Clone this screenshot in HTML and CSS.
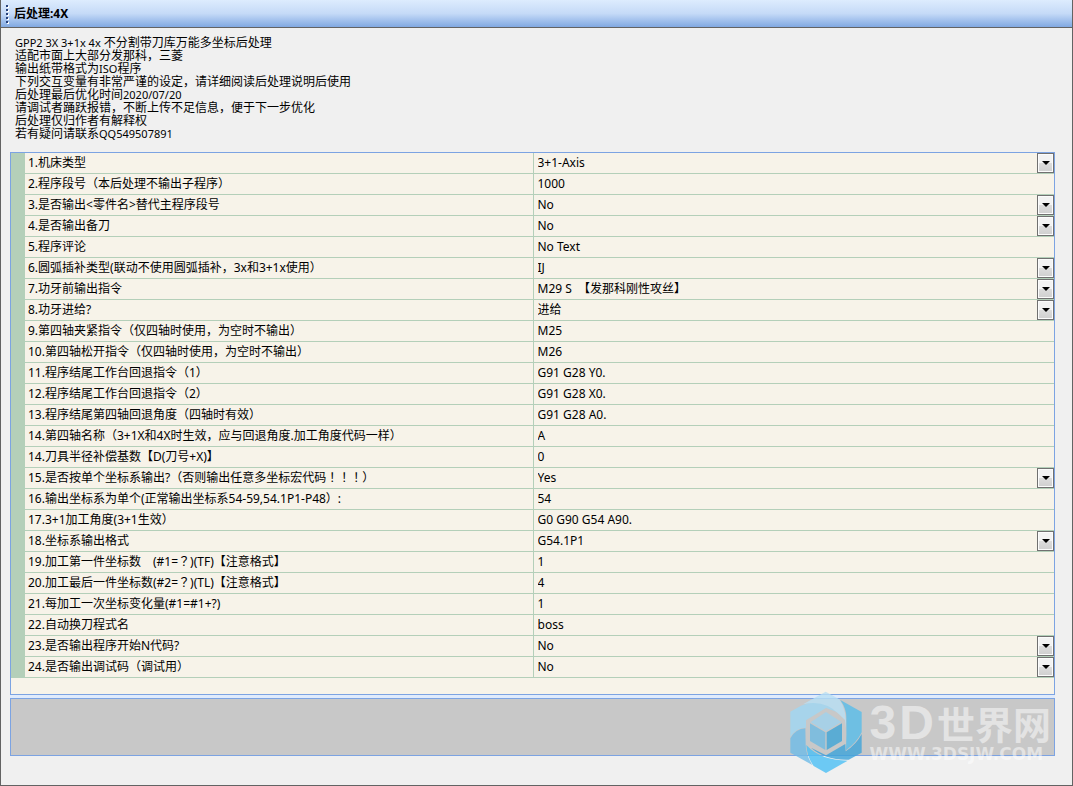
FILE: index.html
```html
<!DOCTYPE html>
<html lang="zh-CN">
<head>
<meta charset="utf-8">
<title>后处理:4X</title>
<link rel="stylesheet" href="styles.css">
</head>
<body>
<main class="panel">
<header class="titlebar"><span class="grip"><i></i><i></i><i></i><i></i><i></i></span><h1 class="title">后处理:4X</h1></header>
<div class="content">
<div class="intro">
<p><span class="latin">GPP2 3X 3+1x 4x</span> 不分割带刀库万能多坐标后处理</p>
<p>适配市面上大部分发那科，三菱</p>
<p>输出纸带格式为<span class="latin">ISO</span>程序</p>
<p>下列交互变量有非常严谨的设定，请详细阅读后处理说明后使用</p>
<p>后处理最后优化时间<span class="latin">2020/07/20</span></p>
<p>请调试者踊跃报错，不断上传不足信息，便于下一步优化</p>
<p>后处理仅归作者有解释权</p>
<p>若有疑问请联系<span class="latin">QQ549507891</span></p>
</div>
<div class="stack">
<div class="grid-box">
<table class="props">
<colgroup><col class="col-gutter"><col><col class="col-value"></colgroup>
<tbody>
<tr><td class="gutter"></td><th scope="row"><label for="f1">1.机床类型</label></th><td class="value"><div class="pick"><select id="f1"><option>3+1-Axis</option></select><span class="drop"></span></div></td></tr>
<tr><td class="gutter"></td><th scope="row"><label for="f2">2.程序段号（本后处理不输出子程序）</label></th><td class="value"><input id="f2" type="text" value="1000"></td></tr>
<tr><td class="gutter"></td><th scope="row"><label for="f3">3.是否输出&lt;零件名&gt;替代主程序段号</label></th><td class="value"><div class="pick"><select id="f3"><option>No</option></select><span class="drop"></span></div></td></tr>
<tr><td class="gutter"></td><th scope="row"><label for="f4">4.是否输出备刀</label></th><td class="value"><div class="pick"><select id="f4"><option>No</option></select><span class="drop"></span></div></td></tr>
<tr><td class="gutter"></td><th scope="row"><label for="f5">5.程序评论</label></th><td class="value"><input id="f5" type="text" value="No Text"></td></tr>
<tr><td class="gutter"></td><th scope="row"><label for="f6">6.圆弧插补类型(联动不使用圆弧插补，3x和3+1x使用）</label></th><td class="value"><div class="pick"><select id="f6"><option>IJ</option></select><span class="drop"></span></div></td></tr>
<tr><td class="gutter"></td><th scope="row"><label for="f7">7.功牙前输出指令</label></th><td class="value"><div class="pick"><select id="f7"><option>M29 S&nbsp; 【发那科刚性攻丝】</option></select><span class="drop"></span></div></td></tr>
<tr><td class="gutter"></td><th scope="row"><label for="f8">8.功牙进给?</label></th><td class="value"><div class="pick"><select id="f8"><option>进给</option></select><span class="drop"></span></div></td></tr>
<tr><td class="gutter"></td><th scope="row"><label for="f9">9.第四轴夹紧指令（仅四轴时使用，为空时不输出）</label></th><td class="value"><input id="f9" type="text" value="M25"></td></tr>
<tr><td class="gutter"></td><th scope="row"><label for="f10">10.第四轴松开指令（仅四轴时使用，为空时不输出）</label></th><td class="value"><input id="f10" type="text" value="M26"></td></tr>
<tr><td class="gutter"></td><th scope="row"><label for="f11">11.程序结尾工作台回退指令（1）</label></th><td class="value"><input id="f11" type="text" value="G91 G28 Y0."></td></tr>
<tr><td class="gutter"></td><th scope="row"><label for="f12">12.程序结尾工作台回退指令（2）</label></th><td class="value"><input id="f12" type="text" value="G91 G28 X0."></td></tr>
<tr><td class="gutter"></td><th scope="row"><label for="f13">13.程序结尾第四轴回退角度（四轴时有效）</label></th><td class="value"><input id="f13" type="text" value="G91 G28 A0."></td></tr>
<tr><td class="gutter"></td><th scope="row"><label for="f14">14.第四轴名称（3+1X和4X时生效，应与回退角度.加工角度代码一样）</label></th><td class="value"><input id="f14" type="text" value="A"></td></tr>
<tr><td class="gutter"></td><th scope="row"><label for="f14b">14.刀具半径补偿基数【D(刀号+X)】</label></th><td class="value"><input id="f14b" type="text" value="0"></td></tr>
<tr><td class="gutter"></td><th scope="row"><label for="f15">15.是否按单个坐标系输出?（否则输出任意多坐标宏代码<span lang="zh-TW">！！！</span>）</label></th><td class="value"><div class="pick"><select id="f15"><option>Yes</option></select><span class="drop"></span></div></td></tr>
<tr><td class="gutter"></td><th scope="row"><label for="f16">16.输出坐标系为单个(正常输出坐标系54-59,54.1P1-P48）:</label></th><td class="value"><input id="f16" type="text" value="54"></td></tr>
<tr><td class="gutter"></td><th scope="row"><label for="f17">17.3+1加工角度(3+1生效）</label></th><td class="value"><input id="f17" type="text" value="G0 G90 G54 A90."></td></tr>
<tr><td class="gutter"></td><th scope="row"><label for="f18">18.坐标系输出格式</label></th><td class="value"><div class="pick"><select id="f18"><option>G54.1P1</option></select><span class="drop"></span></div></td></tr>
<tr><td class="gutter"></td><th scope="row"><label for="f19">19.加工第一件坐标数　(#1=<span lang="zh-TW">？</span>)(TF)【注意格式】</label></th><td class="value"><input id="f19" type="text" value="1"></td></tr>
<tr><td class="gutter"></td><th scope="row"><label for="f20">20.加工最后一件坐标数(#2=<span lang="zh-TW">？</span>)(TL)【注意格式】</label></th><td class="value"><input id="f20" type="text" value="4"></td></tr>
<tr><td class="gutter"></td><th scope="row"><label for="f21">21.每加工一次坐标变化量(#1=#1+?)</label></th><td class="value"><input id="f21" type="text" value="1"></td></tr>
<tr><td class="gutter"></td><th scope="row"><label for="f22">22.自动换刀程式名</label></th><td class="value"><input id="f22" type="text" value="boss"></td></tr>
<tr><td class="gutter"></td><th scope="row"><label for="f23">23.是否输出程序开始N代码?</label></th><td class="value"><div class="pick"><select id="f23"><option>No</option></select><span class="drop"></span></div></td></tr>
<tr><td class="gutter"></td><th scope="row"><label for="f24">24.是否输出调试码（调试用）</label></th><td class="value"><div class="pick"><select id="f24"><option>No</option></select><span class="drop"></span></div></td></tr>
</tbody>
</table>
</div>
<div class="hint"></div>
</div>
</div>
<div class="watermark">
<svg class="mark" viewBox="31 18 216 246" aria-hidden="true">
<path fill="#9fd8f4" d="M32 80 L64 62 Q125 35 180 78 L182 85 L139 69 L79 106 L79 128 Q50 128 32 156Z"/>
<path fill="#b9e0f5" d="M70 58 L138 20 L179 43 Q203 76 198 132 L196 105 L178 88 Q135 42 70 58Z"/>
<path fill="#58bdea" d="M182 45 L246 81 L246 142 Q232 172 199 196 Q201 150 200 100 Q201 72 182 45Z"/>
<path fill="#6fbce8" d="M32 160 Q48 131 77 130 L78 178 Q78 210 98 240 L32 203Z"/>
<path fill="#3ea4da" d="M246 147 L246 203 L207 224 Q137 226 94 188 L139 211 L197 177 L198 199 Q230 178 246 147Z"/>
<path fill="#4cc0f5" d="M80 180 Q122 226 204 227 L139 264 L102 243 Q82 216 80 180Z"/>
<path fill="#9fd3ee" d="M139 81 L185 111 L139 139 L93 112Z"/>
<path fill="#6fbbe3" d="M91 115 L137 142 L137 195 L91 168Z"/>
<path fill="#3fa6d8" d="M141 142 L187 115 L187 168 L141 195Z"/>
</svg>
<div class="brand"><div class="brand-name"><span>3</span><span>D</span><span class="han">世界网</span></div><div class="brand-url">WWW.3DSJW.COM</div></div>
</div>
</main>
</body>
</html>
```
FILE: styles.css
```css
* { box-sizing: border-box; }
body {
  margin: 0;
  background: #f0f0f0;
  color: #000;
  font-family: "Noto Sans", "Noto Sans CJK SC", sans-serif;
  font-size: 12px;
}
.panel {
  position: relative;
  display: flex;
  flex-direction: column;
  min-height: 100vh;
  border: 1px solid #636363;
  border-top: 0;
}
.titlebar {
  display: flex;
  align-items: center;
  gap: 6px;
  height: 28px;
  padding-left: 5px;
  border-bottom: 1px solid #636363;
  background: linear-gradient(#ddecfe, #c5daf7 50%, #81a9e2);
}
.grip { display: flex; flex-direction: column; gap: 2px; }
.grip i {
  width: 2px;
  height: 2px;
  background: #27417a;
  box-shadow: 1px 1px #fff;
}
.title { margin: 0; font-size: 12px; font-weight: 700; line-height: 16px; }
.content { padding: 8px 17px 29px 9px; }
.intro { padding: 0 5px; margin-bottom: 12px; }
.intro p { margin: 0; height: 13px; line-height: 13px; white-space: nowrap; }
.latin { font-size: 11px; }
.stack {
  display: flex;
  flex-direction: column;
  gap: 3px;
  background: #e0ebfc;
}
.grid-box {
  padding-bottom: 16px;
  border: 1px solid #7ca3e2;
  background: #f7f3e9;
}
.props { width: 100%; table-layout: fixed; border-collapse: separate; border-spacing: 0; }
.col-gutter { width: 14px; }
.col-value { width: 50%; }
.props td, .props th {
  height: 21px;
  padding: 0;
  border-bottom: 1px solid #b4cfb9;
  line-height: 20px;
  white-space: nowrap;
}
.props th { padding-left: 3px; text-align: left; font-weight: 400; }
.props label { display: block; height: 20px; overflow: hidden; }
.props .gutter { background: #b4cfb9; }
.props .value { border-left: 1px solid #b4cfb9; }
.value input, .value select {
  display: block;
  width: 100%;
  height: 20px;
  padding: 0 4px;
  border: 0;
  border-radius: 0;
  outline-offset: -1px;
  appearance: none;
  background: transparent;
  color: inherit;
  font: inherit;
  line-height: 20px;
}
.pick { position: relative; }
.drop {
  position: absolute;
  top: 0;
  right: 0;
  display: flex;
  align-items: center;
  justify-content: center;
  width: 17px;
  height: 20px;
  border: 1px solid #707070;
  background: linear-gradient(#f3f3f3 50%, #dddddd 50%, #cfcfcf);
  box-shadow: inset 0 0 0 1px #fcfcfc;
  pointer-events: none;
}
.drop::before {
  content: "";
  border: 4px solid transparent;
  border-top-color: #000;
  border-bottom: 0;
}
.hint { height: 58px; border: 1px solid #7ca3e2; background: #c8c8c8; }
.watermark {
  position: absolute;
  right: 21px;
  bottom: 12px;
  display: flex;
  gap: 8px;
  pointer-events: none;
}
.mark { width: 72px; height: 82px; opacity: 0.8; }
.brand {
  display: flex;
  flex-direction: column;
  padding-top: 9px;
  color: rgba(255, 255, 255, 0.5);
  font-weight: 700;
}
.brand-name {
  display: flex;
  gap: 3px;
  height: 46px;
  font-family: "Liberation Sans", sans-serif;
  font-size: 48px;
  line-height: 46px;
}
.han { font-family: "Noto Sans CJK SC", sans-serif; font-size: 38px; }
.brand-url { font-family: "DejaVu Sans", sans-serif; font-size: 17px; line-height: 16px; }
```
